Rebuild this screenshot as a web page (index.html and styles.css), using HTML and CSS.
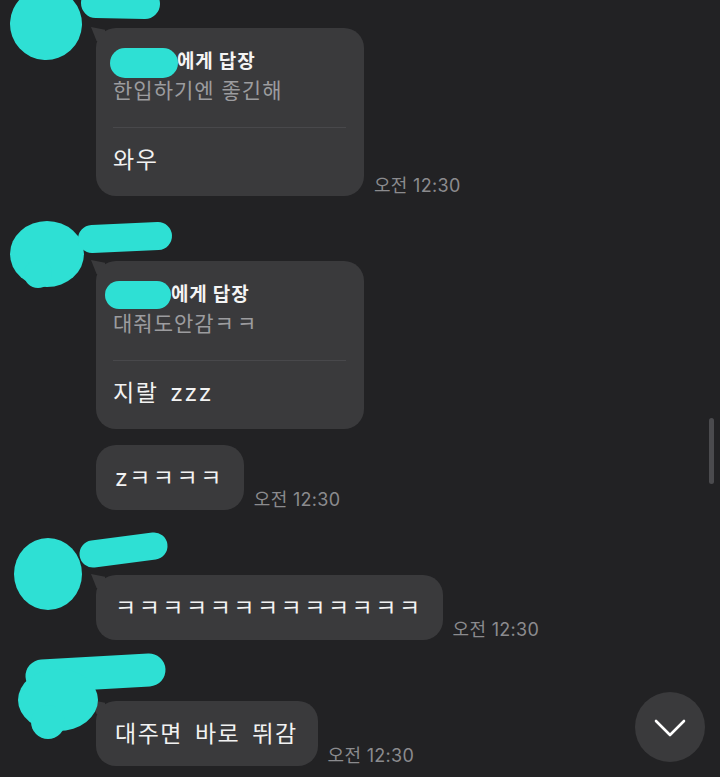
FILE: index.html
```html
<!DOCTYPE html>
<html lang="ko">
<head>
<meta charset="utf-8">
<title>Chat</title>
<link rel="stylesheet" href="styles.css">
</head>
<body>
<div class="chat">
  <div class="group">
    <div class="row">
      <div class="bubble reply first">
        <div class="reply-head"><span class="name"></span>에게 답장</div>
        <div class="reply-quote">한입하기엔 좋긴해</div>
        <div class="divider"></div>
        <div class="msg">와우</div>
      </div>
      <span class="time">오전 12:30</span>
    </div>
  </div>

  <div class="group">
    <div class="row">
      <div class="bubble reply first">
        <div class="reply-head"><span class="name name-short"></span>에게 답장</div>
        <div class="reply-quote">대줘도안감<span class="kq">ㅋㅋ</span></div>
        <div class="divider"></div>
        <div class="msg">지랄 zzz</div>
      </div>
    </div>
    <div class="row">
      <div class="bubble simple">
        <div class="msg">z<span class="kk">ㅋㅋㅋㅋ</span></div>
      </div>
      <span class="time">오전 12:30</span>
    </div>
  </div>

  <div class="group">
    <div class="row">
      <div class="bubble simple first">
        <div class="msg"><span class="kk">ㅋㅋㅋㅋㅋㅋㅋㅋㅋㅋㅋㅋㅋ</span></div>
      </div>
      <span class="time">오전 12:30</span>
    </div>
  </div>

  <div class="group group-last">
    <div class="row">
      <div class="bubble simple first">
        <div class="msg">대주면 바로 뛰감</div>
      </div>
      <span class="time">오전 12:30</span>
    </div>
  </div>
</div>

<svg class="scribbles" width="720" height="777" viewBox="0 0 720 777" aria-hidden="true">
  <g fill="#2ee0d4" stroke="#2ee0d4" stroke-linecap="round">
    <!-- group 1 -->
    <ellipse cx="46" cy="24" rx="36" ry="36" transform="rotate(-20 46 24)" stroke="none"/>
    <line x1="96" y1="3" x2="145" y2="4" stroke-width="30"/>
    <rect x="110" y="48" width="68" height="30" rx="15" stroke="none"/>
    <!-- group 2 -->
    <ellipse cx="47" cy="254" rx="37" ry="33" stroke="none"/>
    <circle cx="38" cy="274" r="14" stroke="none"/>
    <line x1="92" y1="239" x2="158" y2="236" stroke-width="28"/>
    <rect x="105" y="281" width="66" height="28" rx="14" stroke="none"/>
    <!-- group 3 -->
    <ellipse cx="48" cy="574" rx="34" ry="36" stroke="none"/>
    <line x1="93" y1="554" x2="154" y2="546" stroke-width="27"/>
    <!-- group 4 -->
    <line x1="42" y1="676" x2="149" y2="670" stroke-width="33"/>
    <ellipse cx="58" cy="700" rx="40" ry="31" stroke="none"/>
    <circle cx="48" cy="722" r="17" stroke="none"/>
  </g>
</svg>

<div class="scrollbar"></div>
<div class="scroll-btn">
  <svg width="34" height="20" viewBox="0 0 34 20"><polyline points="3,3 17,17 31,3" fill="none" stroke="#ffffff" stroke-width="2.6" stroke-linecap="round" stroke-linejoin="round"/></svg>
</div>
</body>
</html>
```

FILE: styles.css
```css
html, body {
  margin: 0;
  padding: 0;
}
body {
  width: 720px;
  height: 777px;
  overflow: hidden;
  background: #222224;
  font-family: Inter, "Noto Sans CJK KR", sans-serif;
  position: relative;
}
.chat {
  display: flex;
  flex-direction: column;
  padding: 28px 0 0 96px;
}
.group {
  display: flex;
  flex-direction: column;
  gap: 16px;
}
.group + .group {
  margin-top: 65px;
}
.group.group-last {
  margin-top: 61px;
}
.row {
  display: flex;
  align-items: flex-end;
  gap: 10px;
}
.bubble {
  position: relative;
  background: #3a3a3c;
  border-radius: 20px;
  color: #f2f2f2;
  box-sizing: border-box;
}
.bubble.first::before {
  content: "";
  position: absolute;
  left: -5px;
  top: -1px;
  width: 14px;
  height: 14px;
  background: #3a3a3c;
  clip-path: polygon(0 0, 100% 20%, 100% 100%, 40% 100%);
}
.reply {
  width: 268px;
  padding: 21px 18px 21px 17px;
}
.reply-head {
  display: flex;
  align-items: center;
  font-size: 19px;
  font-weight: 700;
  line-height: 26px;
  letter-spacing: 0.8px;
  color: #f4f4f4;
}
.name {
  display: inline-block;
  width: 64px;
  height: 26px;
}
.name.name-short {
  width: 58px;
}
.reply-quote {
  margin-top: 2px;
  font-size: 21px;
  line-height: 28px;
  letter-spacing: 1px;
  color: #9c9c9f;
}
.kq {
  letter-spacing: 3px;
}
.divider {
  height: 1px;
  background: #48484b;
  margin: 22px 0 17px;
}
.msg {
  font-size: 23px;
  line-height: 30px;
  letter-spacing: 1.5px;
  word-spacing: 4px;
  white-space: nowrap;
}
.kk {
  letter-spacing: 2.5px;
}
.simple {
  padding: 18px 20px 17px 19px;
}
.time {
  font-size: 18px;
  line-height: 20px;
  letter-spacing: 0.3px;
  color: #8b8b8e;
  white-space: nowrap;
}
.scribbles {
  position: absolute;
  left: 0;
  top: 0;
  pointer-events: none;
}
.scrollbar {
  position: absolute;
  left: 709px;
  top: 418px;
  width: 5px;
  height: 66px;
  border-radius: 3px;
  background: #4b4b4e;
}
.scroll-btn {
  position: absolute;
  left: 635px;
  top: 692px;
  width: 70px;
  height: 70px;
  border-radius: 50%;
  background: #3a3a3c;
  display: flex;
  align-items: center;
  justify-content: center;
}
.scroll-btn svg {
  margin-top: 2px;
}
```
